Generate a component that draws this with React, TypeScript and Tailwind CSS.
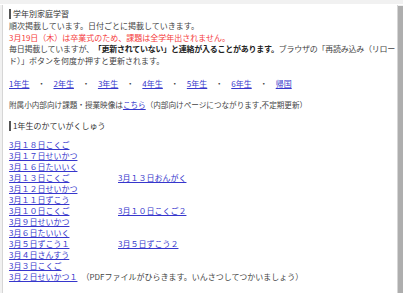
import { Fragment } from "react";

const days: [string, string?][] = [
  ["3月１８日こくご"],
  ["3月１７日せいかつ"],
  ["3月１６日たいいく"],
  ["3月１３日こくご", "3月１３日おんがく"],
  ["3月１２日せいかつ"],
  ["3月１１日ずこう"],
  ["3月１０日こくご", "3月１０日こくご２"],
  ["3月９日せいかつ"],
  ["3月６日たいいく"],
  ["3月５日ずこう１", "3月５日ずこう２"],
  ["3月４日さんすう"],
  ["3月３日こくご"],
];

const grades = ["1年生", "2年生", "3年生", "4年生", "5年生", "6年生", "帰国"];

function Link({ children }: { children: React.ReactNode }) {
  return <a className="text-[#3636cc] underline underline-offset-[1px]">{children}</a>;
}

function Heading({ children }: { children: React.ReactNode }) {
  return (
    <div className="flex h-[12px] items-center gap-[2px] text-[#333]">
      <span className="h-[10px] w-[2px] bg-[#555]" />
      <span>{children}</span>
    </div>
  );
}

export default function App() {
  return (
    <div
      className="flex h-[293px] w-[403px] flex-col overflow-hidden bg-[#f1f1f1] text-[8px] text-[#444]"
      style={{ fontFamily: '"Noto Sans CJK JP", "Noto Sans", sans-serif' }}
    >
      <div className="h-[5px] border-b border-white" />
      <div className="ml-[2px] flex flex-1">
        <div className="min-w-0 flex-1 whitespace-nowrap border-l border-r border-[#d6d6d6] bg-white pl-[6px] pt-[3px]">
          <Heading>学年別家庭学習</Heading>
          <div className="leading-[11.7px]">
            <p>順次掲載しています。日付ごとに掲載していきます。</p>
            <p className="text-[#f53b3b]">3月19日（木）は卒業式のため、課題は全学年出されません。</p>
            <p className="tracking-[-0.25px]">
              毎日掲載していますが、
              <b className="font-bold text-[#222]">「更新されていない」と連絡が入ることがあります。</b>
              ブラウザの「再読み込み（リロー
              <br />
              <span className="tracking-normal">ド）」ボタンを何度か押すと更新されます。</span>
            </p>
          </div>

          <div className="mt-[11px] flex h-[12px] items-center">
            {grades.map((g, i) => (
              <span key={g}>
                <Link>{g}</Link>
                {i < grades.length - 1 && <span>　・　</span>}
              </span>
            ))}
          </div>

          <p className="mt-[9px] h-[12px] text-[7.6px] leading-[12px]">
            附属小内部向け課題・授業映像は<Link>こちら</Link>（内部向けページにつながります,不定期更新）
          </p>

          <div className="mt-[9px]">
            <Heading>1年生のかていがくしゅう</Heading>
          </div>

          <div className="mt-[7px] grid grid-cols-[109px_auto] leading-[11px]">
            {days.map(([a, b]) => (
              <Fragment key={a}>
                <div>
                  <Link>{a}</Link>
                </div>
                <div>{b && <Link>{b}</Link>}</div>
              </Fragment>
            ))}
            <div className="col-span-2">
              <Link>3月２日せいかつ１</Link>
              <span>　（PDFファイルがひらきます。いんさつしてつかいましょう）</span>
            </div>
          </div>
        </div>
        <div className="mt-[1px] w-[5px] bg-[#aeaeae]" />
      </div>
    </div>
  );
}
